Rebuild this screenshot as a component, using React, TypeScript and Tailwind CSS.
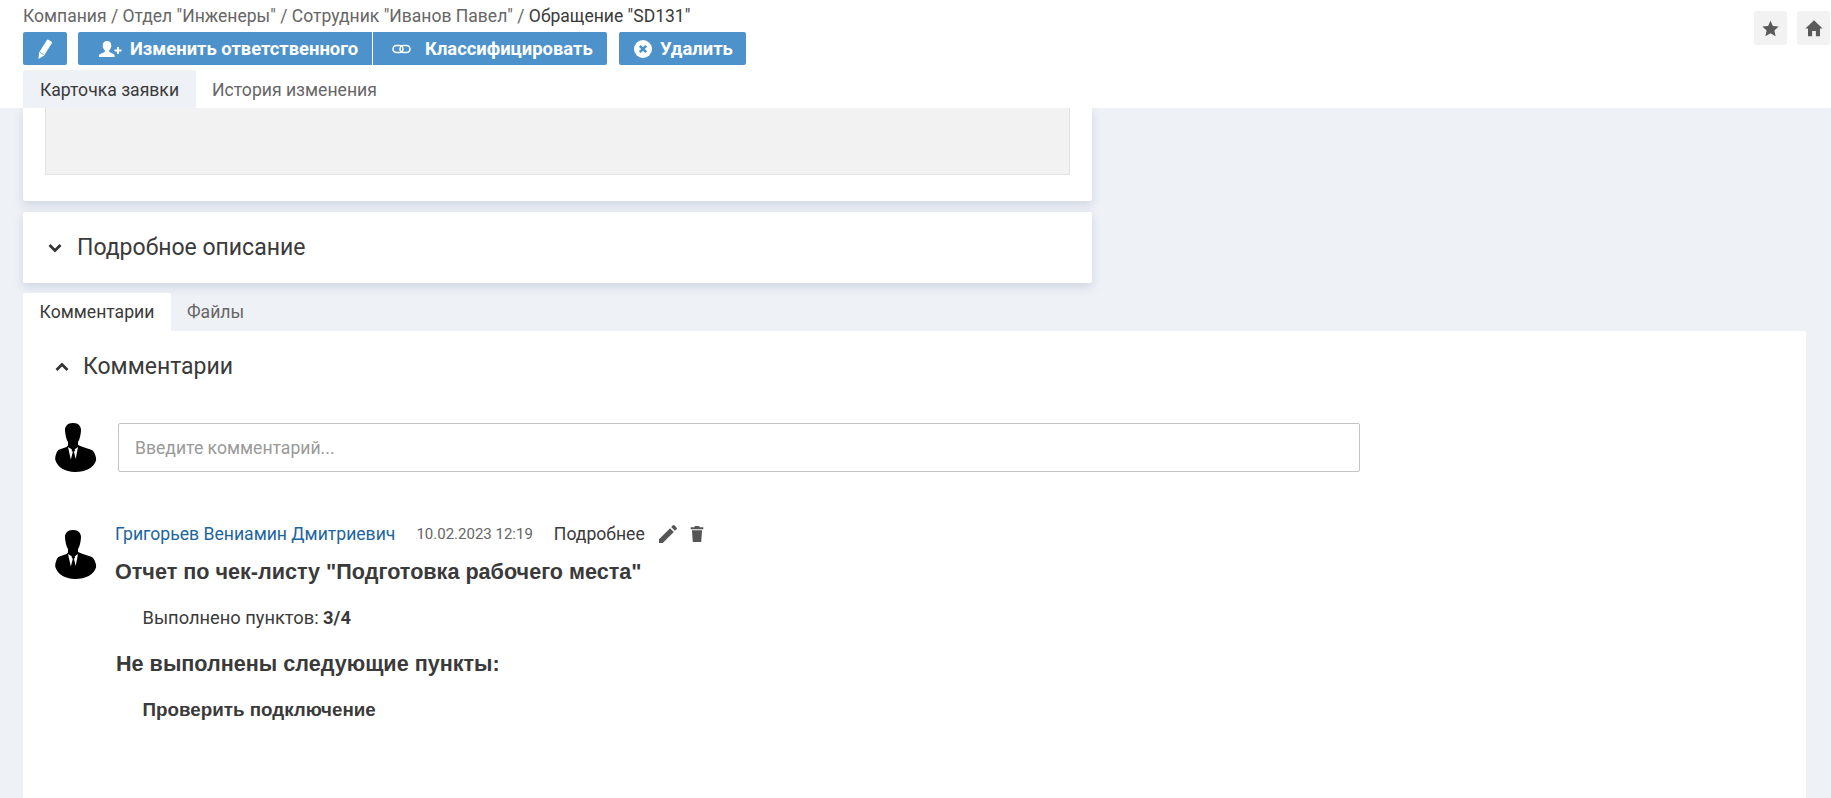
import React from "react";

const Avatar = () => (
  <svg width="42" height="49" viewBox="0 0 42 49" className="shrink-0 ml-[1px]">
    <path fill="#000" d="M17.500 0C13 0 10 2.800 10 7c0 1.500.2 3 .5 4.500.5 3 1.300 5.500 2.500 7.500v3.500l-1.500 1.500-7 2.500C2.500 27 1.500 29.500.8 32 .2 34 0 36 .5 37.500 2.500 44 10 49 20 49c10.500 0 19-4.500 21-11.500.3-1.500 0-3.500-.8-5.500-.8-2.500-2-4.500-4-5.200l-9-3-4.200-1.800V19c1.200-2 2-4.500 2.500-7.500.3-1.500.5-3 .5-4.500 0-4.200-3-7-7.500-7z" />
    <path fill="#fff" d="M13 24l2.800 12.500 2-7.500-1.300-2 .5-.5zM23 24l-2.300 12 -1.700-7 1.200-2-.7-.5z" />
  </svg>
);

const Pencil = ({ size, color }: { size: number; color: string }) => (
  <svg width={size} height={size} viewBox="0 0 24 24" fill={color}>
    <path d="M3 17.250V21h3.750L17.810 9.940l-3.750-3.750L3 17.250zM20.710 7.040a1 1 0 0 0 0-1.410l-2.340-2.340a1 1 0 0 0-1.410 0l-1.830 1.830 3.750 3.750 1.830-1.830z" />
  </svg>
);

const Btn = ({ className, children }: { className?: string; children: React.ReactNode }) => (
  <button className={`h-[33px] bg-[#4d92cb] text-white font-bold text-[18.4px] flex items-center ${className ?? ""}`}>
    {children}
  </button>
);

export default function App() {
  return (
    <div className="h-[798px] w-[1831px] overflow-hidden bg-[#eef1f6] text-[#3a3a3a] font-['Roboto',sans-serif]">
      <header className="h-[108px] bg-white pl-[23px] relative">
        <div className="pt-[5px] h-[32px] text-[17.55px] leading-[22px] text-[#666]">
          Компания / Отдел "Инженеры" / Сотрудник "Иванов Павел" / <span className="text-[#3a3a3a]">Обращение "SD131"</span>
        </div>
        <div className="flex gap-[12px]">
          <div className="mr-[-1px]">
            <Btn className="w-[44px] rounded-[2px] justify-center">
              <svg width="16" height="20" viewBox="0 0 16 20" fill="#fff">
                <path d="M1.500 20l.6-6.500L9.800 1.200a1.200 1.200 0 0 1 1.600-.4l3 1.800a1.200 1.200 0 0 1 .4 1.600L7.100 16.500z" />
                <path d="M2.800 13.200l4 2.600" stroke="#4d92cb" strokeWidth="0.800" />
              </svg>
            </Btn>
          </div>
          <div className="flex gap-px">
            <Btn className="w-[294px] rounded-l-[2px] gap-[8px] pl-[20px]">
              <svg width="24" height="18" viewBox="0 0 24 18" fill="#fff">
                <path d="M9 1c2.800 0 4.300 2 4.300 4.600 0 2-1 3.900-2.100 4.900v1.400l4.300 2c.8.4 1.100 1 1.100 2V17H1v-1.100c0-1 .3-1.600 1.100-2l4.700-2v-1.400C5.700 9.500 4.700 7.600 4.700 5.600 4.700 3 6.200 1 9 1z" />
                <path d="M19 7h2v2.500h2.500v2H21V14h-2v-2.500h-2.500v-2H19z" />
              </svg>
              Изменить ответственного
            </Btn>
            <Btn className="w-[234px] rounded-r-[2px] gap-[14px] pl-[19px]">
              <svg width="19" height="12" viewBox="0 0 19 12" fill="none" stroke="#fff" strokeWidth="1.500">
                <rect x="1" y="2.500" width="10" height="7" rx="3.500" />
                <rect x="8" y="2.500" width="10" height="7" rx="3.500" />
              </svg>
              Классифицировать
            </Btn>
          </div>
          <Btn className="w-[127px] rounded-[2px] gap-[8px] pl-[15px]">
            <svg width="18" height="18" viewBox="0 0 18 18">
              <circle cx="9" cy="9" r="9" fill="#fff" />
              <path d="M5.800 5.800l6.400 6.400M12.200 5.800l-6.400 6.400" stroke="#4d92cb" strokeWidth="2.600" />
            </svg>
            Удалить
          </Btn>
        </div>
        <div className="flex h-[38px] mt-[5px] text-[17.6px]">
          <div className="w-[173px] bg-[#eef1f6] rounded-t-[2px] flex items-center justify-center pt-[2px]">Карточка заявки</div>
          <div className="px-[16px] flex items-center text-[#666] pt-[2px]">История изменения</div>
        </div>
        <div className="absolute top-[11px] left-[1754px] flex gap-[10px]">
          <div className="w-[33px] h-[34px] rounded-[3px] bg-[#f2f2f2] flex items-center justify-center">
            <svg width="17" height="17" viewBox="0 0 24 24" fill="#5a5a5a">
              <path d="M12 1l3.400 7.400 8.100.9-6 5.500 1.700 8L12 18.700l-7.200 4.100 1.700-8-6-5.500 8.100-.9z" />
            </svg>
          </div>
          <div className="w-[33px] h-[34px] rounded-[3px] bg-[#f2f2f2] flex items-center justify-center">
            <svg width="18" height="18" viewBox="0 0 24 24" fill="#5a5a5a">
              <path d="M12 1.500L0.500 12.500H4V23h5.500v-7h5v7H20V12.500h3.500z" />
            </svg>
          </div>
        </div>
      </header>

      <main className="pl-[23px] pr-[25px]">
        <section className="w-[1069px] h-[93px] bg-white rounded-b-[2px] shadow-[0_4px_10px_rgba(170,180,200,0.45)] px-[22px]">
          <div className="h-[67px] bg-[#f2f2f2] border-x border-b border-[#e3e3e3]" />
        </section>

        <section className="w-[1069px] h-[71px] mt-[11px] bg-white rounded-[2px] shadow-[0_4px_10px_rgba(170,180,200,0.45)] flex items-center pl-[24px] gap-[14px]">
          <svg width="16" height="16" viewBox="0 0 16 16" fill="none" stroke="#333" strokeWidth="2.700">
            <path d="M2.500 5l5.500 5.500L13.500 5" />
          </svg>
          <span className="text-[23px] pt-[2px]">Подробное описание</span>
        </section>

        <div className="flex h-[38px] mt-[10px] text-[17.6px]">
          <div className="w-[148px] bg-white rounded-t-[2px] flex items-center justify-center">Комментарии</div>
          <div className="px-[16px] flex items-center text-[#666]">Файлы</div>
        </div>

        <section className="bg-white h-[467px] pl-[31px] pt-[19px]">
          <div className="flex items-center gap-[13px] h-[34px]">
            <svg width="16" height="16" viewBox="0 0 16 16" fill="none" stroke="#333" strokeWidth="2.700">
              <path d="M2.500 11L8 5.500 13.500 11" />
            </svg>
            <span className="text-[23px]">Комментарии</span>
          </div>

          <div className="flex items-center gap-[21px] mt-[39px]">
            <Avatar />
            <input
              placeholder="Введите комментарий..."
              className="w-[1242px] h-[49px] px-[16px] border border-[#c4c4c4] rounded-[2px] text-[17.6px] placeholder:text-[#999] outline-none"
            />
          </div>

          <div className="flex gap-[2px] mt-[58px]">
            <Avatar />
            <div className="-mt-[10px] pl-[16px]">
              <div className="flex items-center h-[28px]">
                <span className="text-[17.6px] text-[#1b659f]">Григорьев Вениамин Дмитриевич</span>
                <span className="text-[15px] text-[#666] ml-[21px]">10.02.2023 12:19</span>
                <span className="text-[17.6px] ml-[21px]">Подробнее</span>
                <span className="ml-[11px] flex"><Pencil size={24} color="#555" /></span>
                <svg className="ml-[10px]" width="14" height="16" viewBox="0 0 16 19" fill="#555">
                  <path d="M5.500 0h5l.7 1.500H15.500v2.500H.5V1.500h4.300zM2 5h12l-1 14H3z" />
                </svg>
              </div>
              <div className="font-['Liberation_Sans',sans-serif] font-bold text-[21.6px] leading-[28px] mt-[10px]">Отчет по чек-листу "Подготовка рабочего места"</div>
              <div className="pl-[27.5px] mt-[18px] text-[18.3px] leading-[28px]">
                Выполнено пунктов: <b className="font-bold">3/4</b>
              </div>
              <div className="font-['Liberation_Sans',sans-serif] font-bold text-[21.6px] leading-[28px] mt-[18px] ml-[1px]">Не выполнены следующие пункты:</div>
              <div className="pl-[27.5px] mt-[18px] font-['Liberation_Sans',sans-serif] font-bold text-[18.8px] leading-[28px]">Проверить подключение</div>
            </div>
          </div>
        </section>
      </main>
    </div>
  );
}
